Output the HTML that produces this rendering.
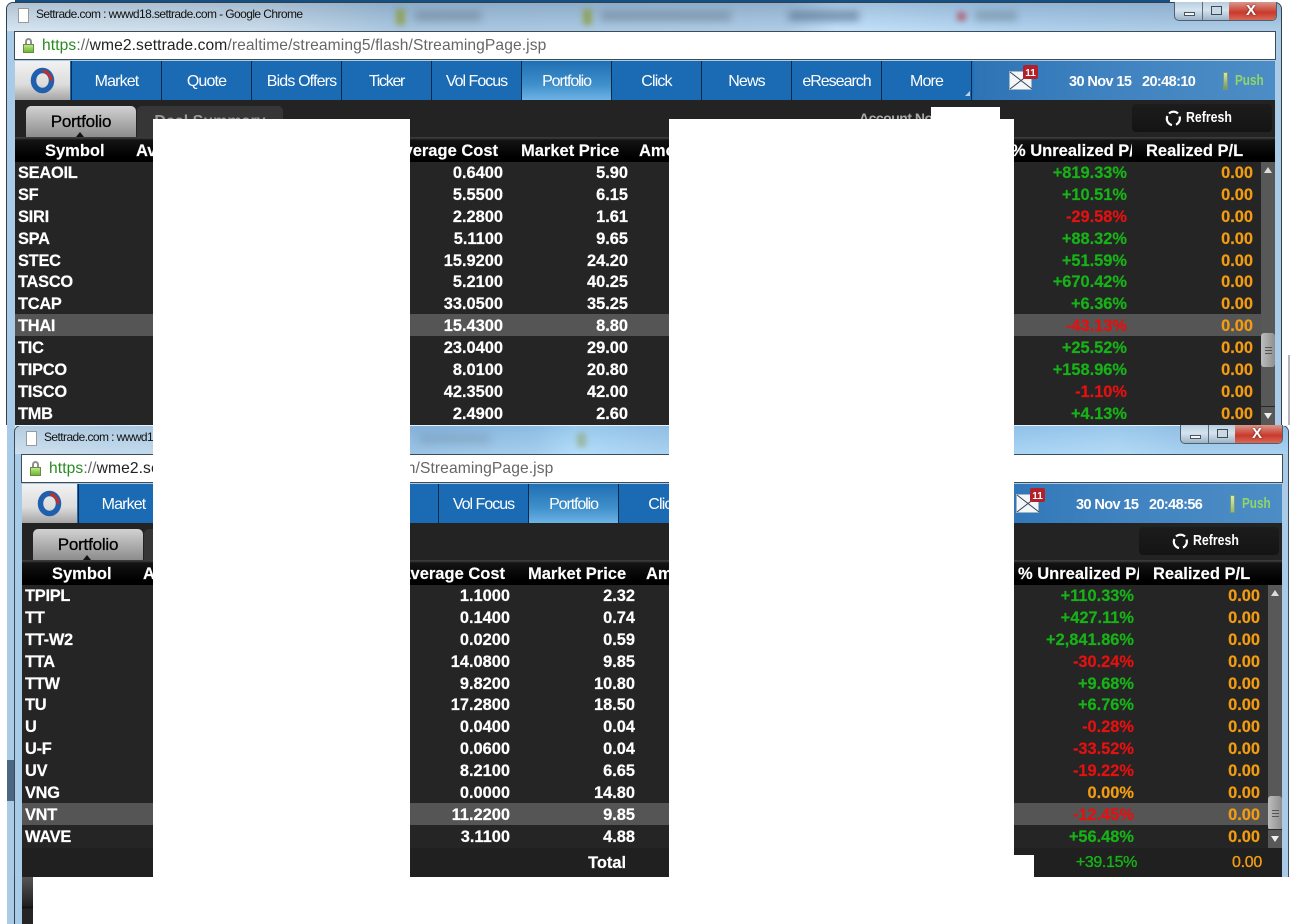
<!DOCTYPE html>
<html><head><meta charset="utf-8"><title>Settrade</title>
<style>
html,body{margin:0;padding:0;background:#fff}
body{width:1308px;height:924px;overflow:hidden;position:relative;font-family:"Liberation Sans",sans-serif}
div,span,b{position:absolute;white-space:nowrap}
.w{left:0;top:0;width:1292px;overflow:hidden}
.fr{left:6px;top:2px;width:1276px;height:100%;background:#a9cbe8;border:1px solid #30404e;border-bottom:0;border-radius:7px 7px 0 0;box-sizing:border-box}
.tb{left:7px;top:3px;width:1274px;height:28px;border-radius:6px 6px 0 0;overflow:hidden}
.bl{background:#50606c;filter:blur(4px);height:10px;top:8px;opacity:.35}
.ic{background:#8a9a30;filter:blur(3px);width:9px;height:16px;top:6px;opacity:.7}
.tt{left:29px;top:4px;font-size:12px;line-height:15px;color:#111;letter-spacing:-.58px}
.doc{left:11px;top:5px;width:9px;height:13px;background:#fff;border:1px solid #9a9a9a}
.ct{left:1174px;top:2px;width:103px;height:19px;border:1px solid #50606e;border-top:0;border-radius:0 0 5px 5px;overflow:hidden;background:linear-gradient(#b8cfe0,#d5e4ef 45%,#9db4c6);box-sizing:border-box}
.cl{left:54px;top:0;width:49px;height:19px;background:linear-gradient(#d9988c,#c9392c 55%,#d9705f)}
.sp{left:27px;top:0;width:1px;height:19px;background:#5a6c7c}
.mn{left:9px;top:10px;width:11px;height:4px;background:#f2f6f9;border:1px solid #4a5560;box-sizing:border-box}
.mx{left:36px;top:4px;width:11px;height:9px;background:#c8d8e4;border:1px solid #3f4a55;box-sizing:border-box}
.xx{left:71px;top:0;color:#fff;font-size:15px;line-height:17px;font-weight:700;text-shadow:0 0 2px #522}
.ad{left:14px;top:31px;width:1262px;height:29px;background:#fff;border:1px solid #3e4c58;box-sizing:border-box}
.url{left:27px;top:5px;font-size:15.6px;line-height:18px;color:#666;letter-spacing:.1px}
.url i{font-style:normal;color:#2a8a22}.url u{text-decoration:none;color:#222}
.lk{left:8px;top:12px;width:11px;height:9px;background:linear-gradient(#bfe58c,#6ab92f);border:1px solid #6a8a40;box-sizing:border-box}
.lk2{left:10px;top:6px;width:7px;height:7px;border:2px solid #8f8f8f;border-bottom:0;border-radius:4px 4px 0 0;box-sizing:border-box}
.nv{left:15px;top:61px;width:1260px;height:39px;background:linear-gradient(90deg,#1a6bb4 0,#1a6bb4 956px,#2d74b6 960px,#4083c0 1100px,#4d8dc6)}
.lg{left:0;top:0;width:55px;height:39px;background:linear-gradient(#f2f2f2,#dcdcdc 60%,#a5a5a5)}
.n{top:0;width:89px;height:39px;border-left:1px solid #082a4a;color:#fff;font-size:16px;line-height:41px;text-align:center;letter-spacing:-.85px}
.act{background:linear-gradient(#1f6fb3,#3f8fcb 60%,#6cb3e4)}
.dk{left:15px;top:100px;width:1260px;height:37px;background:#232323}
.t1{left:11px;top:6px;width:110px;height:31px;border-radius:5px 5px 0 0;background:linear-gradient(#d2d2d2,#8c8c8c);color:#000;font-size:17px;line-height:31px;text-align:center;letter-spacing:-.2px;-webkit-text-stroke:.3px #000}
.t1a{left:50px;top:26px;width:0;height:0;border:4px solid transparent;border-top:0;border-bottom:5px solid #111}
.t2{left:122px;top:6px;width:146px;height:31px;border-radius:5px 5px 0 0;background:#363636;color:#9a9a9a;font-size:16px;font-weight:700;line-height:31px;text-align:center}
.acc{left:844px;top:9px;font-size:14px;font-weight:700;color:#aaa;line-height:18px;letter-spacing:-.5px}
.rf{left:1117px;top:4px;width:140px;height:28px;border-radius:4px;background:linear-gradient(#1c1c1c,#141414)}
.rft{left:54px;top:5px;color:#fff;font-size:14.5px;font-weight:700;line-height:18px;transform:scaleX(.85);transform-origin:0 0}
.hd{left:15px;top:137px;width:1260px;height:25px;background:linear-gradient(#3a3a3a 0,#3a3a3a 1px,#141414 3px,#000 80%,#000);color:#fff;font-size:16.5px;font-weight:700;line-height:28px;-webkit-text-stroke:.15px #fff}
.bd{left:15px;top:162px;width:1260px;height:263px;background:#252525}
.r{left:0;width:1282px;height:22px;font-size:16.4px;font-weight:700;line-height:24px;color:#fff;-webkit-text-stroke:.2px}
.s{left:18px;letter-spacing:-.25px}.a{left:403px;width:100px;text-align:right}.m{left:528px;width:100px;text-align:right}
.u{left:1007px;width:120px;text-align:right}.p{left:1153px;width:100px;text-align:right;color:#f39c12}
.g{color:#17b217}.e{color:#e51010}.o{color:#f39c12}
.hl{left:15px;width:1246px;height:22px;background:#555}
.sb{left:1261px;top:162px;width:14px;height:263px;background:#585858}
.th{left:0;width:14px;height:34px;border-radius:3px;background:linear-gradient(90deg,#bdbdbd,#8f8f8f)}
.gr{left:4px;width:7px;height:1px;background:#555}
.up{left:3px;top:5px;width:0;height:0;border:4px solid transparent;border-top:0;border-bottom:6px solid #ddd}
.dn{left:3px;width:0;height:0;border:4px solid transparent;border-bottom:0;border-top:6px solid #eee}
.ln{left:0;width:14px;height:1px;background:#2a2a2a}
.time{color:#fff;font-size:14.5px;font-weight:700;line-height:18px;top:12px;letter-spacing:-.6px}
.pu{left:1220px;top:11px;color:#8fd66a;font-size:15px;font-weight:700;line-height:18px;transform:scaleX(.78);transform-origin:0 0}
.wh{background:#fff}
</style></head><body>

<!-- strip of window behind -->
<div style="left:15px;top:0;width:1155px;height:2px;background:#164f80"></div>

<!-- WINDOW 1 -->
<div class="w" style="height:425px">
<div class="fr"></div>
<div class="tb" style="background:linear-gradient(rgba(70,100,130,.25),rgba(255,255,255,.08)),linear-gradient(90deg,#d4e3ef 0,#c6d9e9 260px,#a3c3df 390px,#a8c8e4 780px,#c0e0fb 830px,#acd0ef 1000px,#a6c8e6 1170px)">
  <div class="ic" style="left:389px"></div><div class="bl" style="left:408px;width:66px"></div>
  <div class="ic" style="left:576px"></div><div class="bl" style="left:594px;width:130px"></div>
  <div class="bl" style="left:782px;width:70px;background:#304a6a;opacity:.45"></div>
  <div class="ic" style="left:950px;background:#b03040;opacity:.6;top:9px;height:9px"></div><div class="bl" style="left:968px;width:42px"></div>
  <div class="doc"></div>
  <div class="tt">Settrade.com : wwwd18.settrade.com - Google Chrome</div>
</div>
<div class="ct"><div class="sp"></div><div class="mn"></div><div class="mx"></div><div class="cl"></div><b class="xx">X</b></div>
<div class="ad"><div class="lk2"></div><div class="lk"></div>
  <div class="url"><i>https</i>://<u>wme2.settrade.com</u>/realtime/streaming5/flash/StreamingPage.jsp</div></div>
<div class="nv">
  <div class="lg"><svg style="position:absolute;left:14px;top:6px" width="27" height="27" viewBox="0 0 27 27"><ellipse cx="13.5" cy="13.5" rx="9" ry="10" fill="none" stroke="#1f5fae" stroke-width="5.5"/><path d="M14 4a10 10 0 0 1 8 10" fill="none" stroke="#c0302a" stroke-width="3"/></svg></div>
  <div class="n" style="left:56px">Market</div><div class="n" style="left:146px">Quote</div><div class="n" style="left:236px;text-indent:10px">Bids Offers</div><div class="n" style="left:326px;letter-spacing:-1.3px">Ticker</div><div class="n" style="left:416px;letter-spacing:-1px">Vol Focus</div><div class="n act" style="left:506px;letter-spacing:-1.1px">Portfolio</div><div class="n" style="left:596px">Click</div><div class="n" style="left:686px">News</div><div class="n" style="left:776px;letter-spacing:-1px">eResearch</div><div class="n" style="left:866px">More</div>
  <div style="left:956px;top:0;width:1px;height:39px;background:#082a4a"></div>
  <div style="left:950px;top:30px;width:0;height:0;border-left:5px solid transparent;border-bottom:5px solid #b9d3ea"></div>
  <svg style="position:absolute;left:994px;top:4px" width="32" height="26" viewBox="0 0 32 26"><rect x="0.5" y="6.5" width="22" height="18" fill="#f4f6f8" stroke="#9fb5c8"/><path d="M1 7l22 17M23 7L1 24" stroke="#33465a" fill="none"/><rect x="14" y="0" width="15" height="14" rx="2" fill="#b3202a"/><text x="21.5" y="11" fill="#fff" font-family="Liberation Sans" font-size="10" font-weight="700" text-anchor="middle">11</text></svg>
  <span class="time" style="left:1054px">30 Nov 15</span><span class="time" style="left:1127px">20:48:10</span>
  <div style="left:1208px;top:11px;width:3px;height:16px;background:linear-gradient(#d4e8b0,#6f9468);border:1px solid #7c9a70"></div>
  <span class="pu">Push</span>
</div>
<div class="dk"><div class="t1">Portfolio<div class="t1a"></div></div><div class="t2">Deal Summary</div><div class="acc">Account No</div>
  <div class="rf"><svg style="position:absolute;left:33px;top:6px" width="17" height="17" viewBox="0 0 17 17"><path d="M4 3.5A6.5 6.5 0 0 1 13 3.5M14.5 6.5A6.5 6.5 0 0 1 11 14.6M7 15A6.5 6.5 0 0 1 2.4 6" fill="none" stroke="#fff" stroke-width="2.2"/></svg><div class="rft">Refresh</div></div></div>
<div class="hd"><span style="left:30px">Symbol</span><span style="left:121px">Average</span><span style="left:283px;width:200px;text-align:right">Average Cost</span><span style="left:506px">Market Price</span><span style="left:624px">Amount</span><span style="left:996px;width:121px;overflow:hidden">% Unrealized P/L</span><span style="left:1131px">Realized P/L</span></div>
<div class="bd"></div>
<div class="hl" style="top:314px"></div>
<div class="r" style="top:161px"><span class="s">SEAOIL</span><span class="a">0.6400</span><span class="m">5.90</span><span class="u g">+819.33%</span><span class="p">0.00</span></div>
<div class="r" style="top:183px"><span class="s">SF</span><span class="a">5.5500</span><span class="m">6.15</span><span class="u g">+10.51%</span><span class="p">0.00</span></div>
<div class="r" style="top:205px"><span class="s">SIRI</span><span class="a">2.2800</span><span class="m">1.61</span><span class="u e">-29.58%</span><span class="p">0.00</span></div>
<div class="r" style="top:227px"><span class="s">SPA</span><span class="a">5.1100</span><span class="m">9.65</span><span class="u g">+88.32%</span><span class="p">0.00</span></div>
<div class="r" style="top:249px"><span class="s">STEC</span><span class="a">15.9200</span><span class="m">24.20</span><span class="u g">+51.59%</span><span class="p">0.00</span></div>
<div class="r" style="top:270px"><span class="s">TASCO</span><span class="a">5.2100</span><span class="m">40.25</span><span class="u g">+670.42%</span><span class="p">0.00</span></div>
<div class="r" style="top:292px"><span class="s">TCAP</span><span class="a">33.0500</span><span class="m">35.25</span><span class="u g">+6.36%</span><span class="p">0.00</span></div>
<div class="r" style="top:314px"><span class="s">THAI</span><span class="a">15.4300</span><span class="m">8.80</span><span class="u e">-43.13%</span><span class="p">0.00</span></div>
<div class="r" style="top:336px"><span class="s">TIC</span><span class="a">23.0400</span><span class="m">29.00</span><span class="u g">+25.52%</span><span class="p">0.00</span></div>
<div class="r" style="top:358px"><span class="s">TIPCO</span><span class="a">8.0100</span><span class="m">20.80</span><span class="u g">+158.96%</span><span class="p">0.00</span></div>
<div class="r" style="top:380px"><span class="s">TISCO</span><span class="a">42.3500</span><span class="m">42.00</span><span class="u e">-1.10%</span><span class="p">0.00</span></div>
<div class="r" style="top:402px"><span class="s">TMB</span><span class="a">2.4900</span><span class="m">2.60</span><span class="u g">+4.13%</span><span class="p">0.00</span></div>
<div class="sb"><div class="up"></div><div class="th" style="top:171px"></div><div class="gr" style="top:185px"></div><div class="gr" style="top:188px"></div><div class="gr" style="top:191px"></div><div class="ln" style="top:244px"></div><div class="dn" style="top:251px"></div></div>
</div>

<div style="left:7px;top:425px;width:8px;height:499px;background:#a9cbe8"></div>
<div style="left:7px;top:760px;width:8px;height:41px;background:#4a6886"></div>
<div style="left:1288px;top:355px;width:2px;height:70px;background:#b5b5b5"></div>

<!-- WINDOW 2 -->
<div class="w" style="left:7px;top:423px;height:454px">
<div class="fr" style="left:7px;width:1275px;border-color:#3a4a58"></div>
<div style="left:8px;top:2px;width:1273px;height:1px;background:#e4f2fc"></div>
<div class="tb" style="left:8px;width:1273px;background:linear-gradient(rgba(60,110,160,.14),rgba(255,255,255,.12)),linear-gradient(90deg,#c8dcec 0,#a8cce8 300px,#8fbce2 400px,#9ac8ec 520px,#aad9fa 560px,#9ecbee 650px,#9ecfF4 1000px,#aad6f6 1100px,#9dcbee 1170px)">
  <div class="ic" style="left:562px;top:7px;background:#8a9a50;opacity:.5;height:14px"></div>
  <div class="bl" style="left:405px;width:70px;opacity:.18"></div>
  <div class="doc" style="left:11px;top:5px"></div>
  <div class="tt">Settrade.com : wwwd18.settrade.com - Google Chrome</div>
</div>
<div class="ct" style="left:1173px"><div class="sp"></div><div class="mn"></div><div class="mx"></div><div class="cl"></div><b class="xx">X</b></div>
<div class="ad"><div class="lk2"></div><div class="lk"></div>
  <div class="url"><i>https</i>://<u>wme2.settrade.com</u>/realtime/streaming5/flash/StreamingPage.jsp</div></div>
<div class="nv">
  <div class="lg"><svg style="position:absolute;left:14px;top:6px" width="27" height="27" viewBox="0 0 27 27"><ellipse cx="13.5" cy="13.5" rx="9" ry="10" fill="none" stroke="#1f5fae" stroke-width="5.5"/><path d="M14 4a10 10 0 0 1 8 10" fill="none" stroke="#c0302a" stroke-width="3"/></svg></div>
  <div class="n" style="left:56px">Market</div><div class="n" style="left:416px;letter-spacing:-1px">Vol Focus</div><div class="n act" style="left:506px;letter-spacing:-1.1px">Portfolio</div><div class="n" style="left:596px">Click</div>
  <svg style="position:absolute;left:994px;top:4px" width="32" height="26" viewBox="0 0 32 26"><rect x="0.5" y="6.5" width="22" height="18" fill="#f4f6f8" stroke="#9fb5c8"/><path d="M1 7l22 17M23 7L1 24" stroke="#33465a" fill="none"/><rect x="14" y="0" width="15" height="14" rx="2" fill="#b3202a"/><text x="21.5" y="11" fill="#fff" font-family="Liberation Sans" font-size="10" font-weight="700" text-anchor="middle">11</text></svg>
  <span class="time" style="left:1054px">30 Nov 15</span><span class="time" style="left:1127px">20:48:56</span>
  <div style="left:1208px;top:11px;width:3px;height:16px;background:linear-gradient(#d8f0a8,#8fb878);border:1px solid #7c9a70"></div>
  <span class="pu">Push</span>
</div>
<div class="dk"><div class="t1">Portfolio<div class="t1a"></div></div><div class="t2"></div>
  <div class="rf"><svg style="position:absolute;left:33px;top:6px" width="17" height="17" viewBox="0 0 17 17"><path d="M4 3.5A6.5 6.5 0 0 1 13 3.5M14.5 6.5A6.5 6.5 0 0 1 11 14.6M7 15A6.5 6.5 0 0 1 2.4 6" fill="none" stroke="#fff" stroke-width="2.2"/></svg><div class="rft">Refresh</div></div></div>
<div class="hd"><span style="left:30px">Symbol</span><span style="left:121px">Average</span><span style="left:283px;width:200px;text-align:right">Average Cost</span><span style="left:506px">Market Price</span><span style="left:624px">Amount</span><span style="left:996px;width:121px;overflow:hidden">% Unrealized P/L</span><span style="left:1131px">Realized P/L</span></div>
<div class="bd"></div>
<div style="left:15px;top:425px;width:1260px;height:29px;background:#202020"></div>
<div class="hl" style="top:380px"></div>
<div class="r" style="top:161px"><span class="s">TPIPL</span><span class="a">1.1000</span><span class="m">2.32</span><span class="u g">+110.33%</span><span class="p">0.00</span></div>
<div class="r" style="top:183px"><span class="s">TT</span><span class="a">0.1400</span><span class="m">0.74</span><span class="u g">+427.11%</span><span class="p">0.00</span></div>
<div class="r" style="top:205px"><span class="s">TT-W2</span><span class="a">0.0200</span><span class="m">0.59</span><span class="u g">+2,841.86%</span><span class="p">0.00</span></div>
<div class="r" style="top:227px"><span class="s">TTA</span><span class="a">14.0800</span><span class="m">9.85</span><span class="u e">-30.24%</span><span class="p">0.00</span></div>
<div class="r" style="top:249px"><span class="s">TTW</span><span class="a">9.8200</span><span class="m">10.80</span><span class="u g">+9.68%</span><span class="p">0.00</span></div>
<div class="r" style="top:270px"><span class="s">TU</span><span class="a">17.2800</span><span class="m">18.50</span><span class="u g">+6.76%</span><span class="p">0.00</span></div>
<div class="r" style="top:292px"><span class="s">U</span><span class="a">0.0400</span><span class="m">0.04</span><span class="u e">-0.28%</span><span class="p">0.00</span></div>
<div class="r" style="top:314px"><span class="s">U-F</span><span class="a">0.0600</span><span class="m">0.04</span><span class="u e">-33.52%</span><span class="p">0.00</span></div>
<div class="r" style="top:336px"><span class="s">UV</span><span class="a">8.2100</span><span class="m">6.65</span><span class="u e">-19.22%</span><span class="p">0.00</span></div>
<div class="r" style="top:358px"><span class="s">VNG</span><span class="a">0.0000</span><span class="m">14.80</span><span class="u o">0.00%</span><span class="p">0.00</span></div>
<div class="r" style="top:380px"><span class="s">VNT</span><span class="a">11.2200</span><span class="m">9.85</span><span class="u e">-12.45%</span><span class="p">0.00</span></div>
<div class="r" style="top:402px"><span class="s">WAVE</span><span class="a">3.1100</span><span class="m">4.88</span><span class="u g">+56.48%</span><span class="p">0.00</span></div>
<div class="r" style="top:428px"><span class="m" style="left:519px">Total</span><span class="u g" style="left:1010px;font-size:16px;letter-spacing:-.35px;font-weight:400;-webkit-text-stroke:.35px #17b217">+39.15%</span><span class="p" style="left:1155px;font-size:16px;letter-spacing:-.3px;font-weight:400;-webkit-text-stroke:.35px #f39c12">0.00</span></div>
<div class="sb"><div class="up"></div><div class="th" style="top:211px"></div><div class="gr" style="top:225px"></div><div class="gr" style="top:228px"></div><div class="gr" style="top:231px"></div><div class="ln" style="top:244px"></div><div class="dn" style="top:251px"></div></div>
</div>

<!-- below window 2 -->
<div style="left:14px;top:877px;width:1px;height:47px;background:#30404e"></div>
<div style="left:15px;top:877px;width:7px;height:47px;background:#a9cbe8"></div>
<div style="left:22px;top:877px;width:11px;height:47px;background:linear-gradient(#555 0,#222 28px,#111 31px,#252525 32px)"></div>

<!-- redactions -->
<div class="wh" style="left:153px;top:119px;width:257px;height:758px"></div>
<div class="wh" style="left:669px;top:119px;width:345px;height:758px"></div>
<div class="wh" style="left:1014px;top:855px;width:20px;height:22px"></div>
<div class="wh" style="left:931px;top:107px;width:69px;height:12px"></div>
</body></html>
